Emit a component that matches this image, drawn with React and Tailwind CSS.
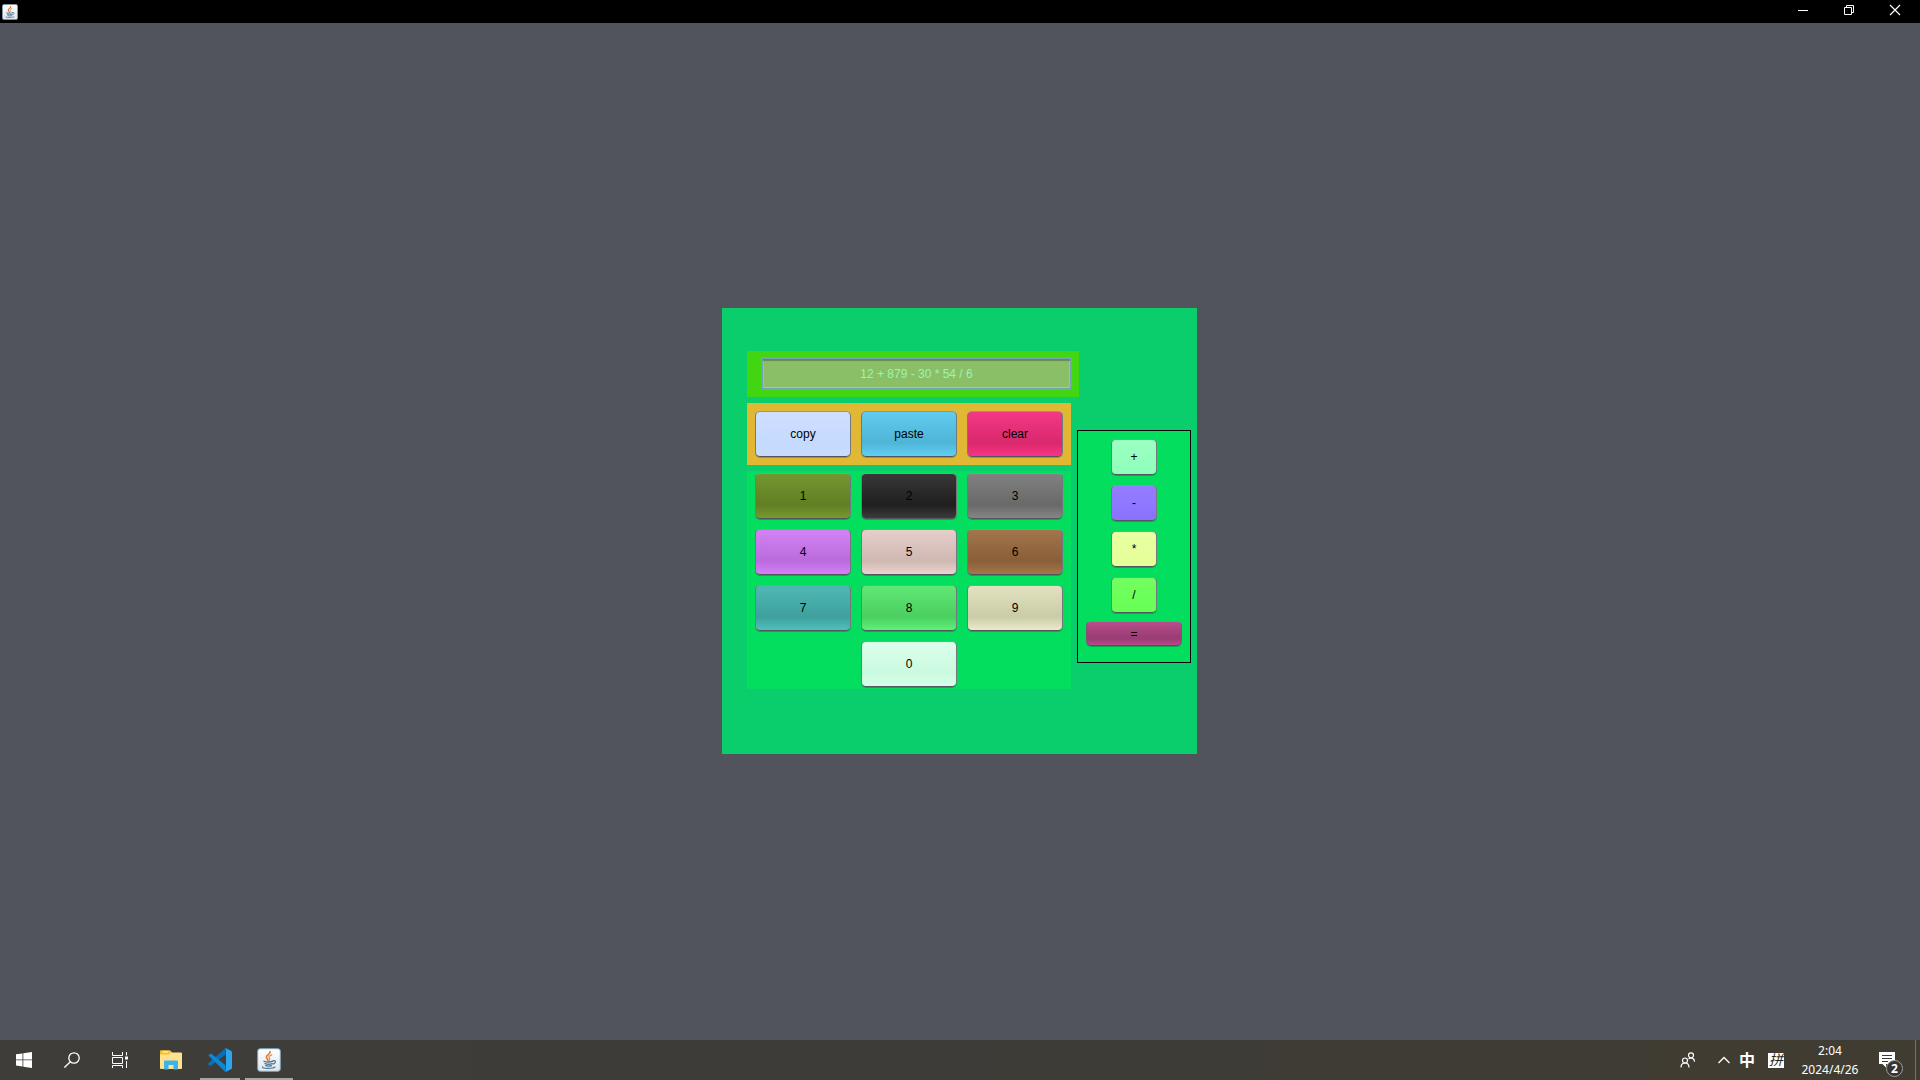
const KEY =
  "flex h-[46px] w-24 items-center justify-center rounded-[5px] border border-t-[#90959a] border-x-[#74787e] border-b-[#53565d] shadow-[0_1px_0_rgba(0,0,0,0.22)] text-xs text-black";
const OP =
  "flex h-9 w-[46px] items-center justify-center rounded-[5px] border border-t-[#90959a] border-x-[#74787e] border-b-[#53565d] shadow-[0_1px_0_rgba(0,0,0,0.22)] text-xs text-black";

const edits = [
  { label: "copy", fill: "bg-linear-to-b from-[#cfdfff] via-[#c5daff] via-70% to-[#c9dcff]" },
  { label: "paste", fill: "bg-linear-to-b from-[#60cbef] via-[#4fb5d7] via-70% to-[#60d0f6]" },
  { label: "clear", fill: "bg-linear-to-b from-[#f43885] via-[#d9286d] via-70% to-[#f93485]" },
];

const digits = [
  { label: "1", fill: "bg-linear-to-b from-[#759730] via-[#607f24] via-70% to-[#779a30]" },
  { label: "2", fill: "bg-linear-to-b from-[#383838] via-[#1f1f1f] via-70% to-[#3c3c3c]" },
  { label: "3", fill: "bg-linear-to-b from-[#818181] via-[#696969] via-70% to-[#858585]" },
  { label: "4", fill: "bg-linear-to-b from-[#d382f5] via-[#ba6bdb] via-70% to-[#d581fa]" },
  { label: "5", fill: "bg-linear-to-b from-[#e6cfcb] via-[#cfb7b2] via-70% to-[#ecd3cf]" },
  { label: "6", fill: "bg-linear-to-b from-[#a2754c] via-[#895f39] via-70% to-[#a5764c]" },
  { label: "7", fill: "bg-linear-to-b from-[#50b8b4] via-[#3fa09e] via-70% to-[#4fc0bb]" },
  { label: "8", fill: "bg-linear-to-b from-[#60e876] via-[#4acf60] via-70% to-[#60f078]" },
  { label: "9", fill: "bg-linear-to-b from-[#e2e2c0] via-[#cacba7] via-70% to-[#eaeac8]" },
  { label: "0", fill: "col-start-2 bg-linear-to-b from-[#dcffeb] via-[#cafae0] via-70% to-[#d6ffe8]" },
];

const operators = [
  { label: "+", name: "add", fill: "bg-linear-to-b from-[#9bffc2] to-[#90ffba]" },
  { label: "-", name: "subtract", fill: "bg-linear-to-b from-[#947dff] to-[#8b72ff]" },
  { label: "*", name: "multiply", fill: "bg-linear-to-b from-[#e9ffa2] to-[#e5ff98]" },
  { label: "/", name: "divide", fill: "bg-linear-to-b from-[#72ff60] to-[#68ff55]" },
];

function JavaIcon({ className, id }) {
  return (
    <svg className={className} viewBox="0 0 24 24" aria-hidden="true">
      <defs>
        <linearGradient id={id} x1="0" y1="0" x2="0" y2="1">
          <stop offset="0" stopColor="#ffffff" />
          <stop offset="1" stopColor="#dfe5ea" />
        </linearGradient>
      </defs>
      <rect x="0.7" y="0.7" width="22.6" height="22.6" rx="2.4" fill={`url(#${id})`} stroke="#7fa5c0" strokeWidth="1" />
      <g fill="none" strokeLinecap="round">
        <path d="M13 3.6c1 2.5-3.700 3.300-3.600 5.500 0 1.500 1.700 1.900 1.500 3.500" stroke="#e8742a" strokeWidth="1.600" />
        <path d="M14.700 6.800c-2.700 1.200-3.200 2-2.300 3.200.6.900.5 1.500-.2 2.200" stroke="#ef8d3f" strokeWidth="1.300" />
        <path d="M7 13.300c2.500.8 7 .7 9-.1M8 15.600c2 .7 5.500.7 7.200 0M8.700 17.700c1.700.5 4.400.5 5.800 0" stroke="#4b7799" strokeWidth="1.400" />
        <path d="M16.300 12.600c2.800-.5 2.900 2.200-.2 3.500" stroke="#4b7799" strokeWidth="1.200" />
        <path d="M5.700 19c-1.500 1.800 9.800 2 12.300.1" stroke="#4b7799" strokeWidth="1.200" />
      </g>
    </svg>
  );
}

function TitleBar() {
  const control = "flex h-[23px] w-[46px] items-center justify-center pb-[3px]";
  return (
    <header className="flex h-[23px] items-center justify-between bg-black px-0.5 text-white">
      <JavaIcon className="h-4 w-4" id="java-title" />
      <div className="flex">
        <button className={control} aria-label="Minimize">
          <svg className="h-3 w-3" viewBox="0 0 12 12" stroke="currentColor" fill="none">
            <path d="M1 6.500h10" />
          </svg>
        </button>
        <button className={control} aria-label="Restore">
          <svg className="h-3 w-3" viewBox="0 0 12 12" stroke="currentColor" fill="none">
            <path d="M1.500 3.500h7v7h-7zM3.500 3.500v-2h7v7h-2" />
          </svg>
        </button>
        <button className={control} aria-label="Close">
          <svg className="h-3 w-3" viewBox="0 0 12 12" stroke="currentColor" strokeWidth="1.200" fill="none">
            <path d="M1 1l10 10M11 1L1 11" />
          </svg>
        </button>
      </div>
    </header>
  );
}

function Calculator() {
  return (
    <section className="flex items-start gap-1.5 bg-[#0acd6b] pt-[43px] pr-1.5 pb-[65px] pl-[25px]" aria-label="Calculator">
      <div className="flex w-[324px] flex-col gap-1.5">
        <div className="-mr-2 bg-[#42d512] pt-1.5 pr-[7px] pb-[7px] pl-3.5">
          <input
            className="block h-[33px] w-full border-2 border-[#74a3b5] bg-[#8abf68] text-center text-xs text-[#9bf5ae] shadow-[inset_0_2px_1px_#658b4c,inset_0_0_0_1px_#b7bda9] outline-none"
            aria-label="Expression"
            defaultValue="12 + 879 - 30 * 54 / 6"
          />
        </div>
        <div className="flex gap-2.5 bg-[#e1b833] p-2">
          {edits.map((k) => (
            <button key={k.label} className={`${KEY} ${k.fill}`}>{k.label}</button>
          ))}
        </div>
        <div className="grid grid-cols-3 gap-2.5 bg-[#03de5f] px-2 py-0.5">
          {digits.map((k) => (
            <button key={k.label} className={`${KEY} ${k.fill}`}>{k.label}</button>
          ))}
        </div>
      </div>
      <div className="mt-[79px] flex flex-col items-center border border-black bg-[#03de5f] px-2 pt-2 pb-4">
        <div className="flex flex-col gap-2.5">
          {operators.map((k) => (
            <button key={k.label} className={`${OP} ${k.fill}`} aria-label={k.name}>{k.label}</button>
          ))}
        </div>
        <button
          className="mt-2 flex h-[25px] w-24 items-center justify-center rounded-[5px] border border-t-[#a87898] border-x-[#805570] border-b-[#5d4c5c] bg-linear-to-b from-[#b94e8e] via-[#993c74] via-70% to-[#b8498b] text-xs text-black shadow-[0_1px_0_rgba(0,0,0,0.22)]"
          aria-label="equals"
        >
          =
        </button>
      </div>
    </section>
  );
}

function Taskbar() {
  const item = "flex h-10 w-12 items-center justify-center";
  const running = "ml-px flex h-10 w-12 flex-col items-center justify-between pt-2";
  return (
    <footer className="flex h-10 justify-between bg-linear-to-r from-[#3e3d39] via-[#3d3c38] to-[#413c31] font-['Noto_Sans','Noto_Sans_CJK_SC',sans-serif] text-white">
      <nav className="flex" aria-label="Taskbar">
        <button className={item} aria-label="Start">
          <svg className="h-4 w-4" viewBox="0 0 16 16" fill="currentColor">
            <path d="M0 2.300L6.500 1.400v6.100H0zM7.300 1.300L16 0v7.500H7.300zM0 8.300h6.500v6.100L0 13.500zM7.300 8.300H16V16l-8.700-1.300z" />
          </svg>
        </button>
        <button className={item} aria-label="Search">
          <svg className="h-4 w-4" viewBox="0 0 16 16" fill="none" stroke="currentColor" strokeWidth="1.300">
            <circle cx="10" cy="6" r="5.200" />
            <path d="M6.300 9.700L.4 15.600" />
          </svg>
        </button>
        <button className={`${item} mr-[3px]`} aria-label="Task view">
          <svg className="h-4 w-4" viewBox="0 0 16 16" fill="none" stroke="currentColor">
            <path d="M.5 0v3.500h10V0M.5 5.500h10v6H.5zM.5 16v-2.500h10V16M14.500 0v3.500M14.500 9v7" />
            <path d="M13 4.500h3v3h-3z" fill="currentColor" stroke="none" />
          </svg>
        </button>
        <button className={item} aria-label="File Explorer">
          <svg className="h-5 w-[22px]" viewBox="0 0 22 20">
            <path d="M0 1.500Q0 .5 1 .5h9l2 2h9q1 0 1 1V18q0 1-1 1H1q-1 0-1-1z" fill="#ffe28e" />
            <path d="M0 1.500Q0 .5 1 .5h9l1 1.500-2 2.500H0z" fill="#f8bd19" />
            <path d="M2.500 2h6" stroke="#fff3c5" strokeWidth="1.300" />
            <path d="M4 19.500v-8q0-1 1-1h12q1 0 1 1v8h-4.500V15h-5v4.500z" fill="#3db2ec" />
          </svg>
        </button>
        <button className={running} aria-label="Visual Studio Code">
          <svg className="h-6 w-6" viewBox="0 0 24 24">
            <path d="M17.500.2v6.300L4 17 2.300 18.300.3 16.500q-.6-.6 0-1.200z" fill="#0871b8" />
            <path d="M.3 7.600L2.300 5.800q.6-.5 1.200 0l14 11.400V24z" fill="#0d87d0" />
            <path d="M16.500.6q.6-.7 1.500-.3l5 2.400q1 .5 1 1.500v15.600q0 1-1 1.500l-5 2.400q-.9.400-1.500-.3 1 .5 1.500-.9V1.500q-.5-1.400-1.500-.9z" fill="#2ba5ee" />
          </svg>
          <span className="h-0.5 w-10 bg-[#aaa5a8]" />
        </button>
        <button className={running} aria-label="Java application">
          <JavaIcon className="h-6 w-6" id="java-task" />
          <span className="h-0.5 w-full bg-[#aaa5a8]" />
        </button>
      </nav>
      <div className="flex items-center">
        <button className="mr-4 flex h-10 w-6 items-center justify-center" aria-label="People">
          <svg className="h-4 w-4" viewBox="0 0 16 16" fill="none" stroke="currentColor" strokeWidth="1.200">
            <circle cx="5" cy="8.500" r="2.500" />
            <path d="M1 15.500c0-6 8-6 8 0" />
            <circle cx="11" cy="3.300" r="2.500" />
            <path d="M8.500 7.200c2.500-2.700 6-1 6 2.500" />
          </svg>
        </button>
        <button className="mr-[7px] flex h-10 w-4 items-center justify-center" aria-label="Show hidden icons">
          <svg className="h-3 w-3" viewBox="0 0 12 12" fill="none" stroke="currentColor" strokeWidth="1.300">
            <path d="M.5 9L6 3.500 11.500 9" />
          </svg>
        </button>
        <button className="mr-[13px] flex h-10 w-4 items-center justify-center text-base leading-4 font-bold">中</button>
        <button className="mr-[13px] flex h-[15px] w-4 items-center justify-center bg-white text-sm leading-4 italic text-[#2a2924]">拼</button>
        <button className="mr-4 flex w-[66px] flex-col items-center text-xs leading-[19px]">
          <span>2:04</span>
          <span>2024/4/26</span>
        </button>
        <button className="relative mr-2 flex h-10 w-7 items-center" aria-label="Notifications">
          <svg className="h-4 w-4" viewBox="0 0 16 16">
            <path d="M0 0h16v12H7v3.500L3.500 12H0z" fill="#fff" />
            <path d="M3 3.500h10M3 6.500h10M3 9.500h6" stroke="#3c3932" />
          </svg>
          <span className="absolute top-5 left-[7px] flex h-[17px] w-[17px] items-center justify-center rounded-full border border-[#a09e99] bg-[#363533] text-xs leading-3 font-bold">2</span>
        </button>
        <span className="mr-1 h-10 w-px bg-[#77736b]" />
      </div>
    </footer>
  );
}

export default function App() {
  return (
    <div className="flex min-h-screen flex-col bg-[#51545d] font-['Liberation_Sans',Arial,sans-serif]">
      <TitleBar />
      <main className="flex flex-1 items-center justify-center pr-px pb-px">
        <Calculator />
      </main>
      <Taskbar />
    </div>
  );
}
